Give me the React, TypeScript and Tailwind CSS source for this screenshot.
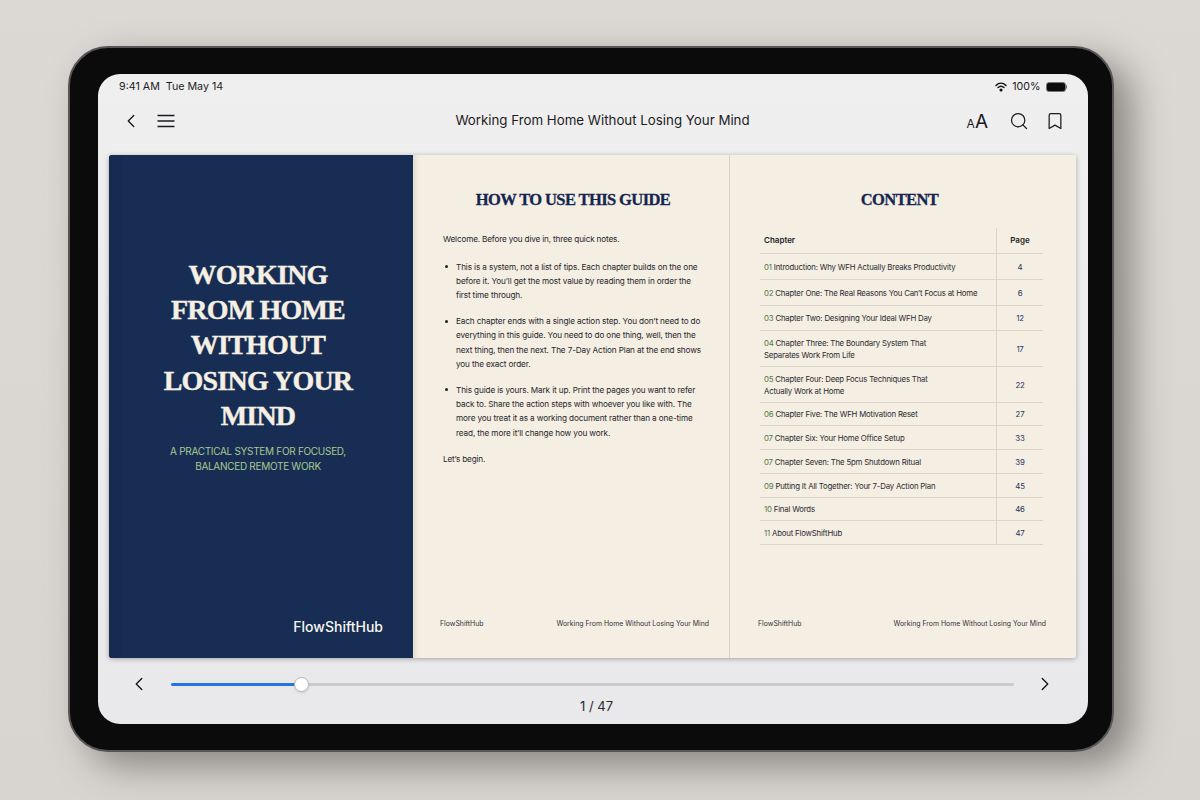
import { Bookmark, ChevronLeft, ChevronRight, Search } from "lucide-react";

const SERIF = "font-['Liberation_Serif',serif]";

interface Chapter {
  num: string;
  lines: string[];
  page: number;
  height: string;
}

const chapters: Chapter[] = [
  { num: "01", lines: ["Introduction: Why WFH Actually Breaks Productivity"], page: 4, height: "h-[26px]" },
  { num: "02", lines: ["Chapter One: The Real Reasons You Can’t Focus at Home"], page: 6, height: "h-[26px]" },
  { num: "03", lines: ["Chapter Two: Designing Your Ideal WFH Day"], page: 12, height: "h-[25px]" },
  { num: "04", lines: ["Chapter Three: The Boundary System That", "Separates Work From Life"], page: 17, height: "h-[36px]" },
  { num: "05", lines: ["Chapter Four: Deep Focus Techniques That", "Actually Work at Home"], page: 22, height: "h-[36px]" },
  { num: "06", lines: ["Chapter Five: The WFH Motivation Reset"], page: 27, height: "h-[23px]" },
  { num: "07", lines: ["Chapter Six: Your Home Office Setup"], page: 33, height: "h-[24px]" },
  { num: "07", lines: ["Chapter Seven: The 5pm Shutdown Ritual"], page: 39, height: "h-[24px]" },
  { num: "09", lines: ["Putting It All Together: Your 7-Day Action Plan"], page: 45, height: "h-[24px]" },
  { num: "10", lines: ["Final Words"], page: 46, height: "h-[23px]" },
  { num: "11", lines: ["About FlowShiftHub"], page: 47, height: "h-[24px]" },
];

const notes = [
  [
    "This is a system, not a list of tips. Each chapter builds on the one",
    "before it. You’ll get the most value by reading them in order the",
    "first time through.",
  ],
  [
    "Each chapter ends with a single action step. You don’t need to do",
    "everything in this guide. You need to do one thing, well, then the",
    "next thing, then the next. The 7-Day Action Plan at the end shows",
    "you the exact order.",
  ],
  [
    "This guide is yours. Mark it up. Print the pages you want to refer",
    "back to. Share the action steps with whoever you like with. The",
    "more you treat it as a working document rather than a one-time",
    "read, the more it’ll change how you work.",
  ],
];

function PageFooter() {
  return (
    <div className="mt-auto flex justify-between text-[6.9px] leading-[10px] text-[#33343a]">
      <span>FlowShiftHub</span>
      <span>Working From Home Without Losing Your Mind</span>
    </div>
  );
}

function Cover() {
  return (
    <div className="flex w-[304px] shrink-0 bg-[#172d53]">
      <div className="w-[14px] shrink-0 bg-[#162b50]" />
      <div className="flex flex-1 flex-col items-center pt-[102px] pr-[20px]">
        <h1 className={`${SERIF} text-center text-[28px] leading-[35.2px] font-bold tracking-[-0.8px] text-[#f6f0e4] [-webkit-text-stroke:0.4px_#f6f0e4]`}>
          WORKING
          <br />
          FROM HOME
          <br />
          WITHOUT
          <br />
          LOSING YOUR
          <br />
          MIND
        </h1>
        <p className="mt-[11px] text-center text-[10px] leading-[15px] tracking-[-0.3px] text-[#a9c98f]">
          A PRACTICAL SYSTEM FOR FOCUSED,
          <br />
          BALANCED REMOTE WORK
        </p>
        <div className="mt-auto mb-[21px] self-end pr-[10px] text-[14px] leading-[20px] font-medium text-[#f8f6f0]">
          FlowShiftHub
        </div>
      </div>
    </div>
  );
}

function GuidePage() {
  return (
    <div className="flex w-[317px] shrink-0 flex-col border-r border-[#d8d1c5] bg-[#f5eee3] pt-[34px] pr-[20px] pb-[29px] pl-[27px] shadow-[inset_6px_0_6px_-5px_rgba(0,0,0,0.12)]">
      <h2 className={`${SERIF} pr-[3px] text-center text-[16.5px] leading-[22px] font-bold tracking-[-0.6px] text-[#14264f] [-webkit-text-stroke:0.3px_#14264f]`}>
        HOW TO USE THIS GUIDE
      </h2>
      <div className="mt-[21px] text-[8.2px] leading-[14.3px] tracking-[-0.17px] text-[#26272c]">
        <p className="pl-[3px]">Welcome. Before you dive in, three quick notes.</p>
        <ul className="mt-[13.5px] flex flex-col gap-[11.5px] tracking-[-0.13px]">
          {notes.map((lines) => (
            <li key={lines[0]} className="relative pl-[16px] whitespace-nowrap">
              <span className="absolute top-[5.5px] left-[5px] h-[3px] w-[3px] rounded-full bg-[#1f2024]" />
              {lines.map((line) => (
                <div key={line}>{line}</div>
              ))}
            </li>
          ))}
        </ul>
        <p className="mt-[11.5px] pl-[3px]">Let’s begin.</p>
      </div>
      <PageFooter />
    </div>
  );
}

function ContentPage() {
  return (
    <div className="flex flex-1 flex-col bg-[#f5eee3] pt-[34px] pr-[30px] pb-[29px] pl-[28px]">
      <h2 className={`${SERIF} pr-[5px] text-center text-[16.5px] leading-[22px] font-bold tracking-[-0.6px] text-[#14264f] [-webkit-text-stroke:0.3px_#14264f]`}>
        CONTENT
      </h2>
      <div className="mt-[17px] ml-[2px] w-[283px] self-start">
        <div className="flex h-[26px] border-b border-[#dcd5c9] text-[8px] font-semibold text-[#1d1e24]">
          <div className="flex flex-1 items-center pb-[2px] pl-[4px]">Chapter</div>
          <div className="flex w-[47px] items-center justify-center border-l border-[#dcd5c9] pb-[2px]">Page</div>
        </div>
        {chapters.map((c) => (
          <div key={c.num + c.page} className={`flex border-b border-[#dcd5c9] text-[7.8px] leading-[12px] tracking-[-0.19px] whitespace-nowrap ${c.height}`}>
            <div className="flex flex-1 flex-col justify-center pl-[4px] text-[#2a2b30]">
              {c.lines.map((line, i) => (
                <div key={line}>
                  {i === 0 && <span className="text-[#4d7a46]">{c.num} </span>}
                  {line}
                </div>
              ))}
            </div>
            <div className="flex w-[47px] items-center justify-center border-l border-[#dcd5c9] text-[#1f3560]">
              {c.page}
            </div>
          </div>
        ))}
      </div>
      <PageFooter />
    </div>
  );
}

export default function App() {
  return (
    <div className="h-[800px] w-[1200px] overflow-hidden bg-gradient-to-b from-[#dcd9d5] to-[#d8d5d1] pt-[46px] pl-[68px] font-['Inter',sans-serif]">
      {/* Tablet */}
      <div className="h-[706px] w-[1046px] rounded-[40px] border-2 border-[#55555a] bg-[#0b0b0b] pt-[26px] pr-[24px] pb-[26px] pl-[28px] shadow-[18px_14px_36px_rgba(60,55,50,0.5)]">
        <div className="flex h-[650px] flex-col overflow-hidden rounded-[22px] bg-gradient-to-b from-[#f0eff0] to-[#e9e8ea]">
          {/* Status bar */}
          <div className="flex h-[21px] shrink-0 items-end justify-between pr-[21px] pl-[21px] text-[10.7px] leading-[16px] text-[#1c1c1e]">
            <div className="flex gap-[6px]">
              <span>9:41 AM</span>
              <span>Tue May 14</span>
            </div>
            <div className="flex items-center gap-[5px]">
              <svg width="12" height="10" viewBox="0 0 24 20" fill="none" stroke="#111" strokeWidth="3" strokeLinecap="round">
                <path d="M2 7c6-6 14-6 20 0" />
                <path d="M6 11c4-3.5 8-3.5 12 0" />
                <circle cx="12" cy="16" r="1.6" fill="#111" />
              </svg>
              <span>100%</span>
              <div className="flex items-center">
                <div className="h-[10px] w-[20px] rounded-[3px] border border-[#77777a] bg-[#0c0c0c]" />
                <div className="h-[4px] w-[1.5px] rounded-r bg-[#77777a]" />
              </div>
            </div>
          </div>
          {/* Toolbar */}
          <div className="relative flex h-[60px] shrink-0 items-center justify-between pr-[23px] pb-[8px] pl-[22px]">
            <div className="flex items-center gap-[15px] text-[#1a1a1c]">
              <ChevronLeft size={22} strokeWidth={1.5} />
              <svg width="18" height="14" viewBox="0 0 18 14" stroke="#1a1a1c" strokeWidth="1.4">
                <path d="M0.5 1.5h17M0.5 7h17M0.5 12.5h17" />
              </svg>
            </div>
            <div className="absolute inset-x-0 pl-[19px] text-center text-[13.3px] text-[#1c1c1e]">
              Working From Home Without Losing Your Mind
            </div>
            <div className="flex items-center gap-[21px] text-[#1a1a1c]">
              <div className="flex items-baseline leading-none">
                <span className="text-[12px]">A</span>
                <span className="text-[19px]">A</span>
              </div>
              <Search size={20} strokeWidth={1.5} />
              <Bookmark size={20} strokeWidth={1.5} className="-ml-[5px]" />
            </div>
          </div>
          {/* Book spread */}
          <div className="mx-[11px] flex h-[503px] w-[967px] shrink-0 overflow-hidden rounded-[3px] shadow-[0_1px_5px_rgba(0,0,0,0.3)]">
            <Cover />
            <GuidePage />
            <ContentPage />
          </div>
          {/* Progress */}
          <div className="mt-[15px] flex h-[22px] shrink-0 items-center pr-[32px] pl-[30px] text-[#1a1a1c]">
            <ChevronLeft size={22} strokeWidth={1.5} />
            <div className="ml-[21px] flex flex-1 items-center pr-[20px]">
              <div className="h-[3px] w-[130px] rounded-l-full bg-[#2374e6]" />
              <div className="relative z-10 -mx-[7px] h-[15px] w-[15px] shrink-0 rounded-full border border-[#b8b8ba] bg-white shadow-sm" />
              <div className="h-[3px] flex-1 rounded-r-full bg-[#cbcacc]" />
            </div>
            <ChevronRight size={22} strokeWidth={1.5} />
          </div>
          <div className="mt-[2px] pl-[7px] text-center text-[13px] leading-[18px] text-[#2a2a2c]">1 / 47</div>
        </div>
      </div>
    </div>
  );
}
